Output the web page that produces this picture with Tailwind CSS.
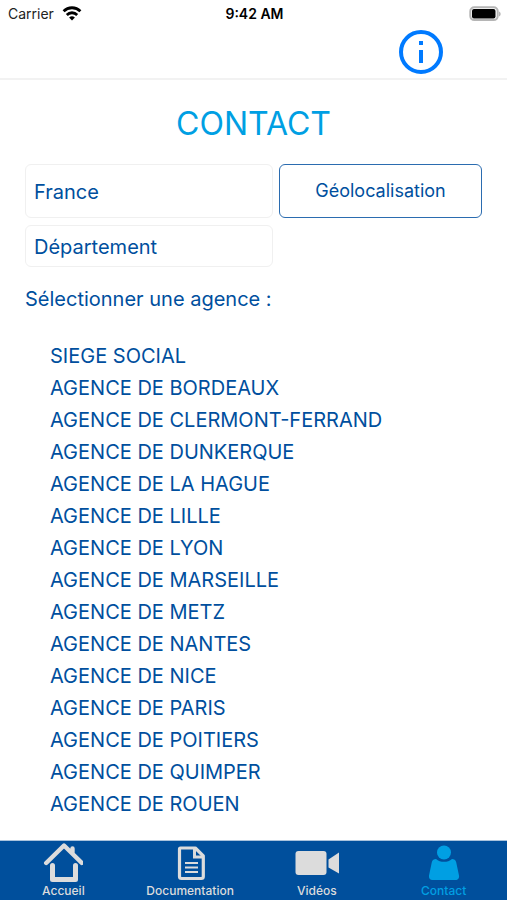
<!DOCTYPE html>
<html lang="fr">
<head>
<meta charset="utf-8">
<meta name="viewport" content="width=device-width, initial-scale=1">
<title>Contact</title>
<script src="https://cdn.jsdelivr.net/npm/@tailwindcss/browser@4"></script>
</head>
<body class="flex min-h-screen flex-col bg-white font-['Inter','Liberation_Sans',sans-serif] text-[#004f9e]">
  <header class="border-b-2 border-[#f2f2f2]">
    <div class="grid h-7 grid-cols-3 items-center pl-2 pr-1.5 text-sm text-[#222]">
      <div class="flex items-center gap-2">
        <span>Carrier</span>
        <svg class="h-4 w-5" viewBox="0 0 20 16" fill="none" stroke="#000" stroke-width="2.8" aria-hidden="true">
          <path d="M1.600 5.200a12 12 0 0 1 16.800 0M4.800 8.900a7.400 7.400 0 0 1 10.400 0"/>
          <path d="M10 14.500l-2.900-2.900a4.100 4.100 0 0 1 5.800 0z" fill="#000" stroke="none"/>
        </svg>
      </div>
      <span class="text-center font-semibold text-black">9:42 AM</span>
      <svg class="h-4 w-8 justify-self-end" viewBox="0 0 32 16" aria-hidden="true">
        <rect x="1.300" y="1.300" width="27.400" height="12.800" rx="4" fill="#fff" stroke="#b5b5b5" stroke-width="2"/>
        <rect x="3" y="3" width="23.500" height="9.500" rx="2" fill="#000"/>
        <path d="M30 5.500c2.200.8 2.200 4.200 0 5z" fill="#b5b5b5"/>
      </svg>
    </div>
    <div class="flex justify-end pb-1 pr-16 pt-0.5">
      <button type="button" aria-label="Informations" class="size-11">
        <svg viewBox="0 0 44 44" fill="#007aff" aria-hidden="true">
          <circle cx="22" cy="22" r="20" fill="none" stroke="#007aff" stroke-width="4"/>
          <path d="M20 11h4v4h-4zM20 20h4v13h-4z"/>
        </svg>
      </button>
    </div>
  </header>

  <main class="flex-1 px-[25px] pt-6">
    <h1 class="text-center text-[32px] leading-10 text-[#009fe3]">CONTACT</h1>
    <form class="mt-5 grid grid-cols-[248fr_203fr] gap-x-1.5 gap-y-[7px]">
      <select aria-label="Pays" class="h-[54px] appearance-none rounded-md border border-[#f0f0f0] px-2 pt-0.5 text-xl">
        <option>France</option>
      </select>
      <button type="button" class="h-[54px] rounded-md border border-[#2b6cb0] text-lg">Géolocalisation</button>
      <select aria-label="Département" class="h-[42px] appearance-none rounded-md border border-[#f0f0f0] px-2 pt-0.5 text-xl">
        <option>Département</option>
      </select>
    </form>
    <h2 class="mt-4 text-xl leading-8">Sélectionner une agence :</h2>
    <ul class="mt-[25px] px-[25px] text-xl leading-8">
      <li>SIEGE SOCIAL</li>
      <li>AGENCE DE BORDEAUX</li>
      <li>AGENCE DE CLERMONT-FERRAND</li>
      <li>AGENCE DE DUNKERQUE</li>
      <li>AGENCE DE LA HAGUE</li>
      <li>AGENCE DE LILLE</li>
      <li>AGENCE DE LYON</li>
      <li>AGENCE DE MARSEILLE</li>
      <li>AGENCE DE METZ</li>
      <li>AGENCE DE NANTES</li>
      <li>AGENCE DE NICE</li>
      <li>AGENCE DE PARIS</li>
      <li>AGENCE DE POITIERS</li>
      <li>AGENCE DE QUIMPER</li>
      <li>AGENCE DE ROUEN</li>
    </ul>
  </main>

  <nav class="sticky bottom-0 grid h-[60px] grid-cols-4 border-t border-[#a9c3dd] bg-[#004f9c] text-xs font-medium leading-4 text-[#dcdcdc]">
    <a href="#accueil" class="flex flex-col items-center pt-0.5">
      <svg class="size-10" viewBox="0 0 40 40" fill="none" stroke="#dcdcdc" aria-hidden="true">
        <path d="M3.200 20L21 2.500 38.800 20M29.500 10V5.500" stroke-width="4.400" stroke-linecap="round" stroke-linejoin="round"/>
        <path d="M9.500 22.500v14h23v-14" stroke-width="5" stroke-linecap="round" stroke-linejoin="round"/>
      </svg>
      <span>Accueil</span>
    </a>
    <a href="#documentation" class="flex flex-col items-center pt-0.5">
      <svg class="size-10" viewBox="0 0 40 40" fill="none" stroke="#dcdcdc" aria-hidden="true">
        <path d="M10.500 5h14.800l8 8v20.500a2 2 0 0 1-2 2H11.500a2 2 0 0 1-2-2V6a1 1 0 0 1 1-1z" stroke-width="3.200" stroke-linejoin="round"/>
        <path d="M24.500 5.500V14H33" stroke-width="3"/>
        <path d="M15 20h13M15 24.500h13M15 29h13" stroke-width="2"/>
      </svg>
      <span>Documentation</span>
    </a>
    <a href="#videos" class="flex flex-col items-center pt-0.5">
      <svg class="h-10 w-11" viewBox="0 0 44 40" fill="#dcdcdc" aria-hidden="true">
        <rect x="0.500" y="8" width="31" height="24" rx="3"/>
        <path d="M33.500 16.500L44 9.500v21L33.500 24.500z"/>
      </svg>
      <span>Vidéos</span>
    </a>
    <a href="#contact" aria-current="page" class="flex flex-col items-center pt-0.5 text-[#009fe3]">
      <svg class="size-10" viewBox="0 0 40 40" fill="#009fe3" aria-hidden="true">
        <circle cx="20" cy="9.500" r="7"/>
        <path d="M12 16c4.200 3.800 11.800 3.800 16 0 2 0 3.700 1 4.200 3.200L35 32.500c.5 2.500-1 4.500-3.500 4.500h-23C6 37 4.500 35 5 32.500l2.800-13.300C8.300 17 10 16 12 16z"/>
      </svg>
      <span>Contact</span>
    </a>
  </nav>
</body>
</html>
